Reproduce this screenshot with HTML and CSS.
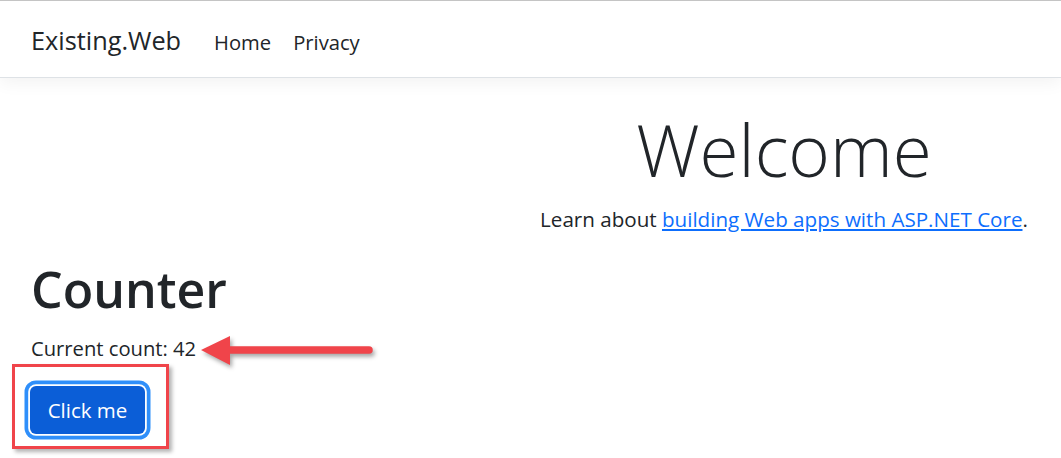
FILE: index.html
```html
<!DOCTYPE html>
<html lang="en">
<head>
<meta charset="utf-8">
<title>Existing.Web</title>
<link rel="stylesheet" href="styles.css">
</head>
<body>
<header class="navbar">
  <div class="container nav-row">
    <a class="brand" href="#">Existing.Web</a>
    <nav class="nav">
      <a class="nav-link" href="#">Home</a>
      <a class="nav-link" href="#">Privacy</a>
    </nav>
  </div>
</header>
<main class="container main">
  <div class="welcome">
    <h1 class="display">Welcome</h1>
    <p class="lead">Learn about <a href="#">building Web apps with ASP.NET Core</a>.</p>
  </div>
  <section class="counter">
    <h1 class="counter-title">Counter</h1>
    <p class="count" role="status">Current count: 42
      <svg class="arrow" width="185" height="42" viewBox="0 0 185 42" aria-hidden="true">
        <line x1="32" y1="20" x2="174" y2="20" stroke="#f0444a" stroke-width="7.5" stroke-linecap="round"/>
        <polygon points="6,20 35,6 35,35" fill="#f0444a"/>
      </svg>
    </p>
    <div class="btn-wrap">
      <button class="btn">Click me</button>
      <span class="highlight" aria-hidden="true"></span>
    </div>
  </section>
</main>
</body>
</html>
```

FILE: styles.css
```css
html, body {
  margin: 0;
  padding: 0;
  background: #fff;
}
body {
  font-family: "Open Sans", "Noto Sans", sans-serif;
  color: #212529;
  font-size: 20.2px;
  min-height: 458px;
}
.container {
  box-sizing: border-box;
  padding-left: 31px;
}
.navbar {
  height: 78px;
  box-sizing: border-box;
  border-top: 1px solid #c4c4c4;
  border-bottom: 1px solid #dee2e6;
  box-shadow: 0 5px 16px rgba(0, 0, 0, 0.05);
  background: #fff;
  position: relative;
  z-index: 1;
}
.nav-row {
  display: flex;
  align-items: baseline;
  padding-top: 21px;
}
.brand {
  font-size: 25.3px;
  line-height: 36px;
  color: #212529;
  text-decoration: none;
  margin-right: 22px;
}
.nav {
  display: flex;
}
.nav-link {
  font-size: 20.2px;
  line-height: 36px;
  color: #212529;
  text-decoration: none;
  padding: 0 11px;
}
.main {
  padding-top: 29px;
  padding-bottom: 30px;
}
.welcome {
  text-align: center;
  padding-left: 476px;
}
.display {
  margin: 0;
  font-size: 71px;
  font-weight: 300;
  line-height: 1.2;
}
.lead {
  margin: 12px 0 0;
  font-size: 20.6px;
  line-height: 30px;
}
.lead a {
  color: #0d6efd;
  text-decoration: underline;
}
.counter-title {
  margin: 25px 0 0;
  font-size: 50px;
  font-weight: 600;
  line-height: 60px;
}
.count {
  position: relative;
  margin: 14px 0 0;
  font-size: 20.2px;
  line-height: 30px;
}
.arrow {
  position: absolute;
  left: 164px;
  top: -3px;
  filter: drop-shadow(2px 3px 2px rgba(0, 0, 0, 0.35));
}
.btn-wrap {
  position: relative;
  display: inline-block;
  margin-top: 23px;
  margin-left: -1px;
}
.btn {
  display: flex;
  align-items: center;
  justify-content: center;
  width: 115px;
  height: 48px;
  box-sizing: border-box;
  border: 0;
  border-radius: 6px;
  background: #0b5ed7;
  color: #fff;
  font-family: "Open Sans", "Noto Sans", sans-serif;
  font-size: 20.5px;
  line-height: 30px;
  padding: 0;
  box-shadow: 0 0 0 1.8px #fff, 0 0 0 5.5px #2f8ffa;
}
.highlight {
  position: absolute;
  left: -18px;
  right: -24px;
  top: -22px;
  bottom: -15px;
  border: 3px solid #f0444a;
  box-shadow: 3px 3px 4px rgba(0, 0, 0, 0.3);
}
```
